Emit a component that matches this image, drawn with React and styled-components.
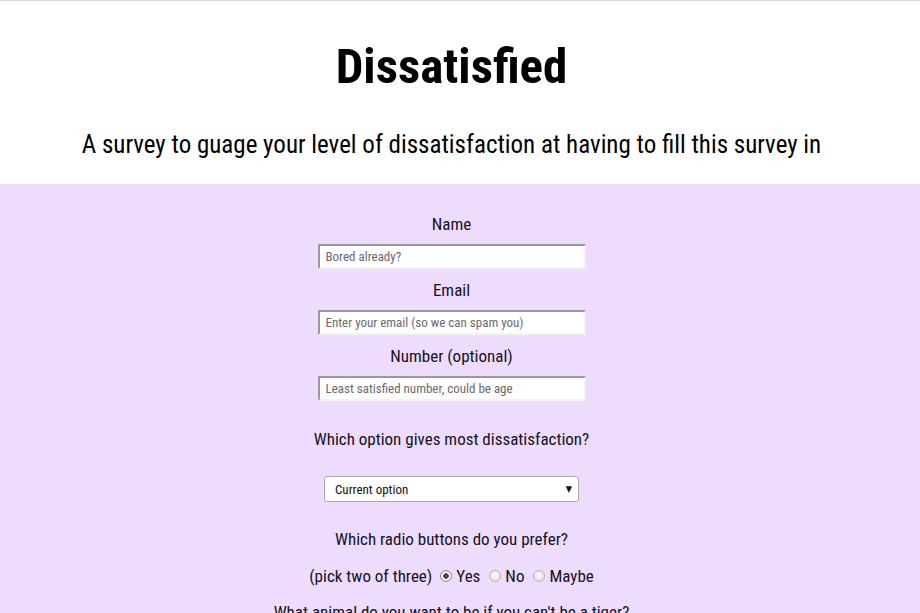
import React from "react";
import styled, { createGlobalStyle } from "styled-components";

const GlobalStyle = createGlobalStyle`
  html, body {
    margin: 0;
    padding: 0;
    background: #eedcff;
  }
  body {
    font-family: "Roboto Condensed", "Liberation Sans Narrow", "DejaVu Sans Condensed", Roboto, sans-serif;
    font-stretch: condensed;
    color: #15121f;
  }
`;

// the reference was taken with a scrollbar, so the centre sits 17px to the left
const Header = styled.header`
  background: #fff;
  border-top: 1px solid #dcdcdc;
  text-align: center;
  padding: 41px 17px 25px 0;
`;

const Title = styled.h1`
  margin: 0;
  font-size: 49px;
  line-height: 1;
  font-weight: 700;
  color: #000;
`;

const Subtitle = styled.p`
  margin: 40px 0 0;
  font-size: 25px;
  line-height: 28px;
  color: #000;
`;

const Form = styled.form`
  display: flex;
  flex-direction: column;
  align-items: center;
  padding: 30px 17px 0 0;
`;

const Label = styled.label`
  display: block;
  font-size: 17px;
  line-height: 20px;
  margin: ${p => (p.$first ? "0" : "11px")} 0 10px;
`;

const Input = styled.input`
  box-sizing: border-box;
  width: 268px;
  height: 25px;
  border: 2px solid;
  border-color: #9b979f #f3f3f3 #f3f3f3 #9b979f;
  padding: 0 6px;
  font-family: inherit;
  font-size: 13px;
  background: #fff;
  &::placeholder {
    color: #6c6a70;
  }
`;

const Question = styled.p`
  margin: ${p => p.$top || "28px"} 0 0;
  font-size: 17px;
  line-height: 20px;
  text-align: center;
`;

const SelectWrap = styled.div`
  position: relative;
  margin-top: 27px;
`;

const Select = styled.select`
  appearance: none;
  box-sizing: border-box;
  display: block;
  width: 255px;
  height: 26px;
  border: 1px solid #a9a9a9;
  border-radius: 3px;
  background: #fff;
  padding: 0 10px;
  font-family: inherit;
  font-size: 13px;
  color: #111;
`;

const Arrow = styled.span`
  position: absolute;
  right: 7px;
  top: 7px;
  font-size: 9px;
  line-height: 12px;
  pointer-events: none;
  color: #111;
`;

const RadioRow = styled.div`
  display: flex;
  align-items: center;
  margin-top: 17px;
  font-size: 17px;
  line-height: 20px;
`;

const Hint = styled.span`
  margin-right: 8px;
`;

const Option = styled.label`
  display: flex;
  align-items: center;
  margin-right: 9px;
  &:last-child {
    margin-right: 0;
  }
`;

const Radio = styled.input`
  appearance: none;
  box-sizing: border-box;
  width: 12px;
  height: 12px;
  margin: 0 4px 0 0;
  border-radius: 50%;
  border: 1px solid #b3b3b3;
  background: radial-gradient(circle at 50% 40%, #fafafa, #dcdcdc);
  &:checked {
    background: radial-gradient(circle, #4a4a4a 0 2.5px, #f6f6f6 3px, #dcdcdc);
    border-color: #8f8f8f;
  }
`;

export default function App() {
  return (
    <>
      <GlobalStyle />
      <Header>
        <Title>Dissatisfied</Title>
        <Subtitle>
          A survey to guage your level of dissatisfaction at having to fill this survey in
        </Subtitle>
      </Header>
      <Form>
        <Label $first htmlFor="name">Name</Label>
        <Input id="name" placeholder="Bored already?" />
        <Label htmlFor="email">Email</Label>
        <Input id="email" placeholder="Enter your email (so we can spam you)" />
        <Label htmlFor="number">Number (optional)</Label>
        <Input id="number" placeholder="Least satisfied number, could be age" />
        <Question>Which option gives most dissatisfaction?</Question>
        <SelectWrap>
          <Select defaultValue="current">
            <option value="current">Current option</option>
            <option value="other">Other option</option>
          </Select>
          <Arrow>▼</Arrow>
        </SelectWrap>
        <Question $top="27px">Which radio buttons do you prefer?</Question>
        <RadioRow>
          <Hint>(pick two of three)</Hint>
          <Option>
            <Radio type="radio" name="pref" defaultChecked />
            Yes
          </Option>
          <Option>
            <Radio type="radio" name="pref" />
            No
          </Option>
          <Option>
            <Radio type="radio" name="pref" />
            Maybe
          </Option>
        </RadioRow>
        <Question $top="16px">What animal do you want to be if you can't be a tiger?</Question>
      </Form>
    </>
  );
}
